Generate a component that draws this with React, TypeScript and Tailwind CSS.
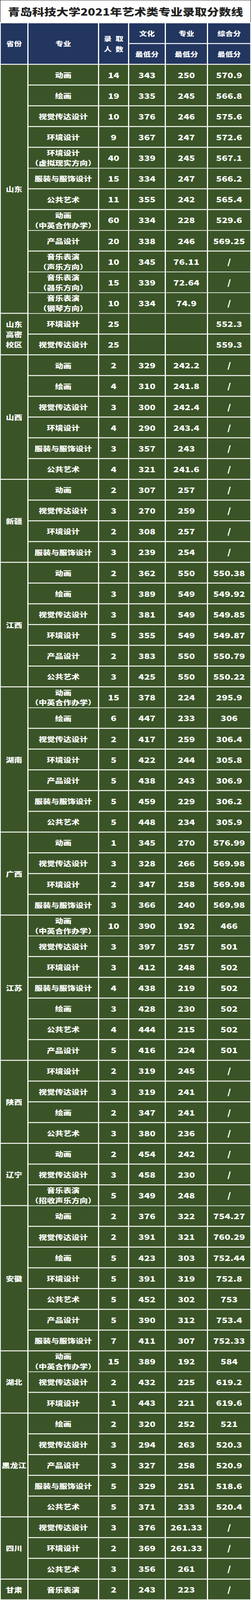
import React, { useLayoutEffect, useState } from "react";

type Row = [string, string, string, string, string];
type Group = { p: string[]; rows: Row[] };

const PAGE_H = 5089;

const groups: Group[] = [
  {
    p: ["山东"],
    rows: [
      ["动画", "14", "343", "250", "570.9"],
      ["绘画", "19", "335", "245", "566.8"],
      ["视觉传达设计", "10", "376", "246", "575.6"],
      ["环境设计", "9", "367", "247", "572.6"],
      ["环境设计\n（虚拟现实方向）", "40", "339", "245", "567.1"],
      ["服装与服饰设计", "15", "334", "247", "566.2"],
      ["公共艺术", "11", "355", "242", "565.4"],
      ["动画\n（中英合作办学）", "60", "334", "228", "529.6"],
      ["产品设计", "20", "338", "246", "569.25"],
      ["音乐表演\n（声乐方向）", "10", "345", "76.11", "/"],
      ["音乐表演\n（器乐方向）", "15", "339", "72.64", "/"],
      ["音乐表演\n（钢琴方向）", "10", "334", "74.9", "/"],
    ],
  },
  {
    p: ["山东", "高密", "校区"],
    rows: [
      ["环境设计", "25", "", "", "552.3"],
      ["视觉传达设计", "25", "", "", "559.3"],
    ],
  },
  {
    p: ["山西"],
    rows: [
      ["动画", "2", "329", "242.2", "/"],
      ["绘画", "4", "310", "241.8", "/"],
      ["视觉传达设计", "3", "300", "242.4", "/"],
      ["环境设计", "4", "290", "243.4", "/"],
      ["服装与服饰设计", "3", "357", "243", "/"],
      ["公共艺术", "4", "321", "241.6", "/"],
    ],
  },
  {
    p: ["新疆"],
    rows: [
      ["动画", "2", "307", "257", "/"],
      ["视觉传达设计", "3", "270", "259", "/"],
      ["环境设计", "2", "308", "257", "/"],
      ["服装与服饰设计", "3", "239", "254", "/"],
    ],
  },
  {
    p: ["江西"],
    rows: [
      ["动画", "2", "362", "550", "550.38"],
      ["绘画", "3", "389", "549", "549.92"],
      ["视觉传达设计", "3", "381", "549", "549.85"],
      ["环境设计", "5", "355", "549", "549.87"],
      ["产品设计", "2", "383", "550", "550.79"],
      ["公共艺术", "3", "425", "550", "550.22"],
    ],
  },
  {
    p: ["湖南"],
    rows: [
      ["动画\n（中英合作办学）", "15", "378", "224", "295.9"],
      ["绘画", "6", "447", "233", "306"],
      ["视觉传达设计", "2", "417", "259", "306.4"],
      ["环境设计", "5", "422", "244", "305.8"],
      ["产品设计", "5", "438", "243", "306.9"],
      ["服装与服饰设计", "5", "459", "229", "306.2"],
      ["公共艺术", "5", "448", "234", "305.9"],
    ],
  },
  {
    p: ["广西"],
    rows: [
      ["动画", "1", "345", "270", "576.99"],
      ["视觉传达设计", "3", "328", "266", "569.98"],
      ["环境设计", "2", "347", "258", "569.98"],
      ["服装与服饰设计", "3", "366", "240", "569.98"],
    ],
  },
  {
    p: ["江苏"],
    rows: [
      ["动画\n（中英合作办学）", "10", "390", "192", "466"],
      ["视觉传达设计", "3", "397", "257", "501"],
      ["环境设计", "3", "412", "248", "502"],
      ["服装与服饰设计", "4", "438", "219", "502"],
      ["绘画", "3", "428", "230", "502"],
      ["公共艺术", "4", "444", "215", "502"],
      ["产品设计", "5", "416", "224", "501"],
    ],
  },
  {
    p: ["陕西"],
    rows: [
      ["环境设计", "2", "319", "245", "/"],
      ["视觉传达设计", "3", "319", "241", "/"],
      ["绘画", "2", "347", "241", "/"],
      ["公共艺术", "3", "380", "236", "/"],
    ],
  },
  {
    p: ["辽宁"],
    rows: [
      ["动画", "2", "454", "242", "/"],
      ["视觉传达设计", "3", "458", "230", "/"],
      ["音乐表演\n（招收声乐方向）", "5", "349", "248", "/"],
    ],
  },
  {
    p: ["安徽"],
    rows: [
      ["动画", "2", "376", "322", "754.27"],
      ["视觉传达设计", "2", "391", "321", "760.29"],
      ["绘画", "5", "423", "303", "752.44"],
      ["环境设计", "5", "391", "319", "752.8"],
      ["公共艺术", "5", "452", "302", "753"],
      ["产品设计", "5", "390", "312", "753.4"],
      ["服装与服饰设计", "7", "411", "307", "752.33"],
    ],
  },
  {
    p: ["湖北"],
    rows: [
      ["动画\n（中英合作办学）", "15", "389", "192", "584"],
      ["视觉传达设计", "2", "432", "225", "619.2"],
      ["环境设计", "1", "443", "221", "619.6"],
    ],
  },
  {
    p: ["黑龙江"],
    rows: [
      ["绘画", "2", "320", "252", "521"],
      ["视觉传达设计", "3", "294", "263", "520.3"],
      ["产品设计", "3", "327", "258", "520.9"],
      ["服装与服饰设计", "5", "329", "251", "518.6"],
      ["公共艺术", "5", "371", "233", "520.4"],
    ],
  },
  {
    p: ["四川"],
    rows: [
      ["视觉传达设计", "3", "376", "261.33", "/"],
      ["环境设计", "2", "369", "261.33", "/"],
      ["公共艺术", "3", "356", "261", "/"],
    ],
  },
  {
    p: ["甘肃"],
    rows: [["音乐表演", "2", "243", "223", "/"]],
  },
];

const green = "bg-[#3a5427]";
const navy = "bg-[#22365f]";

function NumCell({ v }: { v: string }) {
  return (
    <div className={`${green} flex items-center justify-center text-[24px] leading-none`}>
      {v}
    </div>
  );
}

function DataRow({ r }: { r: Row }) {
  const lines = r[0].split("\n");
  return (
    <div className="grid h-[63px] grid-cols-[178px_74px_91px_105px_108px] gap-[3px]">
      <div className={`${green} flex flex-col items-center justify-center text-[21px] leading-[32px]`}>
        {lines.map((l, i) => (
          <span key={i} className="whitespace-nowrap">
            {l}
          </span>
        ))}
      </div>
      <NumCell v={r[1]} />
      <NumCell v={r[2]} />
      <NumCell v={r[3]} />
      <NumCell v={r[4]} />
    </div>
  );
}

function HeadCell({ children, className = "" }: { children: React.ReactNode; className?: string }) {
  return (
    <div className={`${navy} flex items-center justify-center text-[20px] ${className}`}>
      {children}
    </div>
  );
}

function Sheet() {
  return (
    <div className="w-[643px] bg-white font-['Noto_Sans_CJK_SC',sans-serif] font-black text-white">
      <div className="flex h-[71px] items-center justify-center border-x border-t border-[#111]">
        <h1 className="whitespace-nowrap text-[31px] font-black leading-none text-[#222]">
          青岛科技大学2021年艺术类专业录取分数线
        </h1>
      </div>
      <div className="flex flex-col gap-[3px] px-[2px] pt-[3px] pb-[2px]">
        <div className="flex h-[129px] gap-[3px]">
          <HeadCell className="w-[68px]">省份</HeadCell>
          <HeadCell className="w-[178px]">专业</HeadCell>
          <HeadCell className="w-[74px] flex-col leading-[33px]">
            <span className="flex gap-[10px]">
              <span>录</span>
              <span>取</span>
            </span>
            <span className="flex gap-[10px]">
              <span>人</span>
              <span>数</span>
            </span>
          </HeadCell>
          <div className="flex w-[91px] flex-col gap-[3px]">
            <HeadCell className="h-[63px]">文化</HeadCell>
            <HeadCell className="h-[63px]">最低分</HeadCell>
          </div>
          <div className="flex w-[105px] flex-col gap-[3px]">
            <HeadCell className="h-[63px]">专业</HeadCell>
            <HeadCell className="h-[63px]">最低分</HeadCell>
          </div>
          <div className="flex w-[108px] flex-col gap-[3px]">
            <HeadCell className="h-[63px]">综合分</HeadCell>
            <HeadCell className="h-[63px]">最低分</HeadCell>
          </div>
        </div>
        {groups.map((g, gi) => (
          <div key={gi} className="flex gap-[3px]">
            <div
              className={`${green} flex w-[68px] shrink-0 flex-col items-center justify-center text-[21px] leading-[32px]`}
            >
              {g.p.map((l, i) => (
                <span key={i} className="whitespace-nowrap">
                  {l}
                </span>
              ))}
            </div>
            <div className="flex flex-col gap-[3px]">
              {g.rows.map((r, ri) => (
                <DataRow key={ri} r={r} />
              ))}
            </div>
          </div>
        ))}
      </div>
    </div>
  );
}

export default function App() {
  // The sheet is laid out at its true 643×5089 size; if the window is shorter
  // than the sheet, it is fitted to the window height so nothing is cut off.
  const [scale, setScale] = useState(1);
  useLayoutEffect(() => {
    const fit = () => setScale(Math.min(1, window.innerHeight / PAGE_H));
    fit();
    window.addEventListener("resize", fit);
    return () => window.removeEventListener("resize", fit);
  }, []);
  return (
    <div className="w-[643px] overflow-hidden bg-white" style={{ height: PAGE_H * scale }}>
      <div className="origin-top" style={{ transform: `scaleY(${scale})` }}>
        <Sheet />
      </div>
    </div>
  );
}
